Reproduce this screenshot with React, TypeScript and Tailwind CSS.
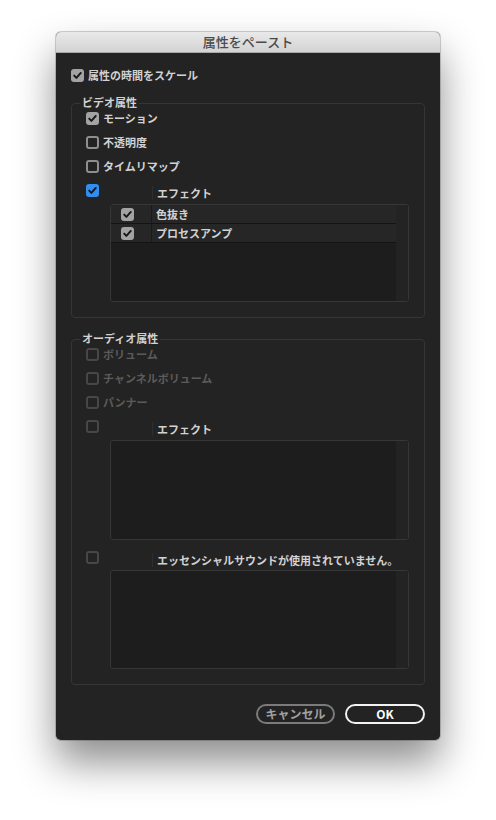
import React from "react";

type BoxKind = "checked" | "unchecked" | "blue" | "disabled" | "row";

/** Small check glyph drawn inside the boxes */
function Check({ color }: { color: string }) {
  return (
    <svg width="13" height="13" viewBox="0 0 13 13" className="block">
      <path
        d="M3.2 6.6 L5.4 8.9 L9.8 3.9"
        fill="none"
        stroke={color}
        strokeWidth="1.9"
        strokeLinecap="round"
        strokeLinejoin="round"
      />
    </svg>
  );
}

function Box({ kind }: { kind: BoxKind }) {
  if (kind === "checked" || kind === "row") {
    return (
      <div className="h-[13px] w-[13px] shrink-0 rounded-[3px] bg-[#a3a3a3]">
        <Check color="#161616" />
      </div>
    );
  }
  if (kind === "blue") {
    return (
      <div className="h-[13px] w-[13px] shrink-0 rounded-[3px] bg-[#2f8ef0]">
        <Check color="#0e1620" />
      </div>
    );
  }
  return (
    <div
      className={
        kind === "disabled"
          ? "h-[13px] w-[13px] shrink-0 rounded-[3px] border-2 border-[#474747]"
          : "h-[13px] w-[13px] shrink-0 rounded-[3px] border-2 border-[#8e8e8e]"
      }
    />
  );
}

function Row({ label, kind }: { label: string; kind: BoxKind }) {
  return (
    <div className="flex h-6 items-center gap-[4px]">
      <Box kind={kind} />
      <span
        className={
          kind === "disabled"
            ? "leading-4 text-[#5b5b5b]"
            : "leading-4 text-[#d2d2d2]"
        }
      >
        {label}
      </span>
    </div>
  );
}

/** Header line of an effect list: checkbox, thin divider, title */
function EffectHeader({
  label,
  kind,
  tall,
}: {
  label: string;
  kind: BoxKind;
  tall?: boolean;
}) {
  return (
    <div className={tall ? "flex h-[30px]" : "flex h-[26px]"}>
      <div className={tall ? "w-[66px] pt-[11px]" : "w-[66px] pt-[6px]"}>
        <Box kind={kind} />
      </div>
      <div
        className={
          tall
            ? "mt-[13px] h-[14px] border-l border-[#2e2e2e]"
            : "mt-[8px] h-[14px] border-l border-[#2e2e2e]"
        }
      />
      <span
        className={
          tall
            ? "pl-[4px] pt-[12px] leading-4 text-[#d2d2d2]"
            : "pl-[4px] pt-[7px] leading-4 text-[#d2d2d2]"
        }
      >
        {label}
      </span>
    </div>
  );
}

function EffectList({ items, height }: { items: string[]; height: string }) {
  return (
    <div
      className={`ml-[24px] flex w-[299px] overflow-hidden rounded-[3px] border border-[#363636] bg-[#1d1d1d] ${height}`}
    >
      <div className="flex-1">
        {items.map((item) => (
          <div
            key={item}
            className="flex h-[19px] border-b border-[#141414] bg-[#262626]"
          >
            <div className="flex w-[41px] items-center border-r border-[#1a1a1a] pl-[10px]">
              <Box kind="row" />
            </div>
            <span className="pl-[4px] leading-[18px] text-[#d2d2d2]">
              {item}
            </span>
          </div>
        ))}
      </div>
      <div className="w-[12px] bg-[#232323]" />
    </div>
  );
}

function Group({
  title,
  children,
}: {
  title: string;
  children: React.ReactNode;
}) {
  return (
    <div className="rounded-[4px] border border-[#353535] pb-[15px] pl-[14px]">
      <div className="-mt-[10px] mb-[-4px] -ml-[6px] w-fit bg-[#232323] px-[2px] leading-4 text-[#d2d2d2]">
        {title}
      </div>
      {children}
    </div>
  );
}

export default function App() {
  return (
    <div className="h-[820px] w-[496px] bg-white pl-[56px] pt-[32px] font-['Noto_Sans_CJK_JP',sans-serif] text-[11px] font-bold">
      <div className="flex h-[708px] w-[384px] flex-col overflow-hidden rounded-[5px] bg-[#232323] shadow-[0_0_0_1px_rgba(0,0,0,0.18),0_22px_40px_rgba(0,0,0,0.45)]">
        <div className="flex h-[21px] items-center justify-center border-b border-[#a8a8a8] bg-gradient-to-b from-[#e9e9e9] to-[#d3d3d3] text-[13px] font-medium text-[#4a4a4a]">
          属性をペースト
        </div>

        <div className="flex flex-1 flex-col px-[15px] pt-[10px]">
          <div className="flex h-6 items-center gap-[4px]">
            <Box kind="checked" />
            <span className="leading-4 text-[#d2d2d2]">属性の時間をスケール</span>
          </div>

          <div className="mt-[16px]">
            <Group title="ビデオ属性">
              <Row label="モーション" kind="checked" />
              <Row label="不透明度" kind="unchecked" />
              <Row label="タイムリマップ" kind="unchecked" />
              <EffectHeader label="エフェクト" kind="blue" />
              <EffectList items={["色抜き", "プロセスアンプ"]} height="h-[98px]" />
            </Group>
          </div>

          <div className="mt-[21px]">
            <Group title="オーディオ属性">
              <Row label="ボリューム" kind="disabled" />
              <Row label="チャンネルボリューム" kind="disabled" />
              <Row label="パンナー" kind="disabled" />
              <EffectHeader label="エフェクト" kind="disabled" />
              <EffectList items={[]} height="h-[100px]" />
              <EffectHeader
                label="エッセンシャルサウンドが使用されていません。"
                kind="disabled"
                tall
              />
              <EffectList items={[]} height="h-[99px]" />
            </Group>
          </div>

          <div className="mt-auto mb-[16px] flex justify-end gap-[10px]">
            <button className="h-[20px] w-[79px] rounded-full border-2 border-[#7b7b7b] text-[12px] leading-none text-[#a0a0a0]">
              キャンセル
            </button>
            <button className="h-[20px] w-[80px] rounded-full border-2 border-[#f2f2f2] text-[12px] leading-none text-white">
              OK
            </button>
          </div>
        </div>
      </div>
    </div>
  );
}
